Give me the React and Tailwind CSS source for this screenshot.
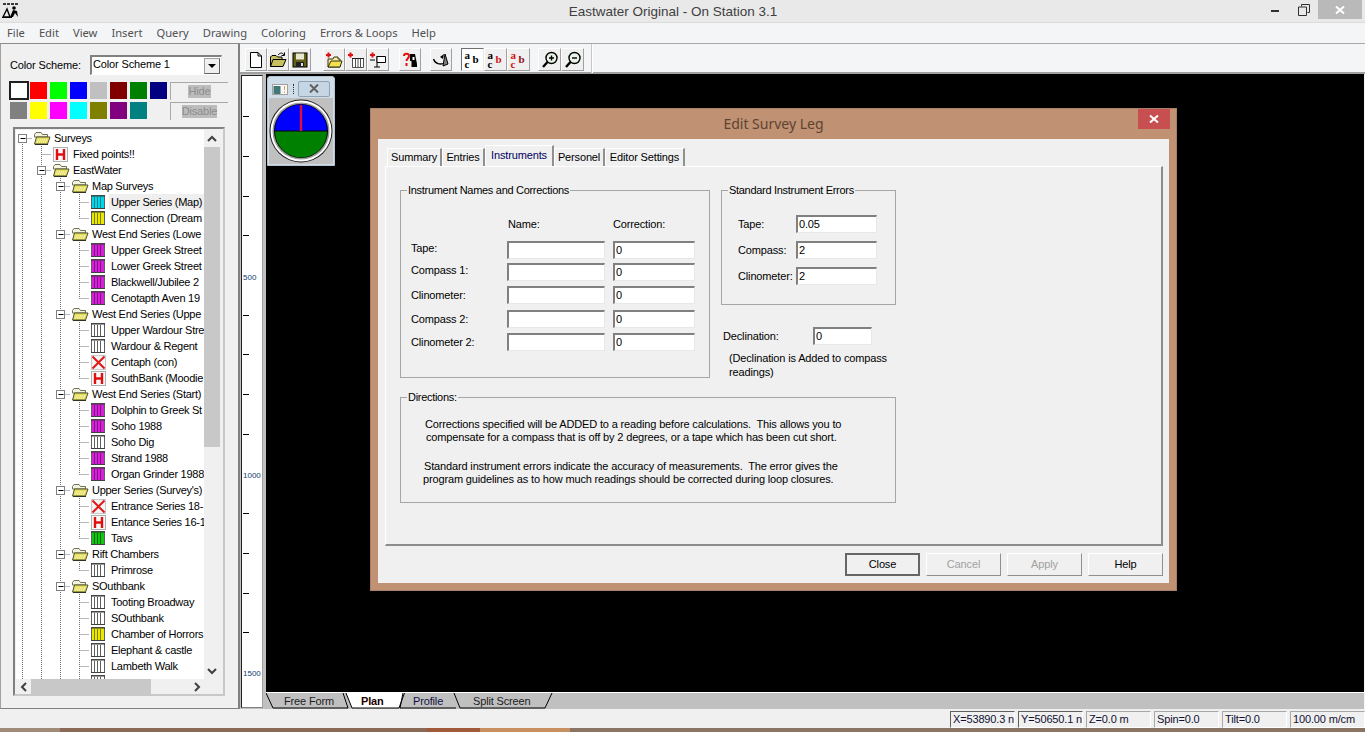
import React from "react";

const MENU = ["File", "Edit", "View", "Insert", "Query", "Drawing", "Coloring", "Errors & Loops", "Help"];

const TREE = [
  [0, "f", "Surveys"],
  [1, "H", "Fixed points!!"],
  [1, "f", "EastWater"],
  [2, "f", "Map Surveys"],
  [3, "c", "Upper Series (Map)", "sel"],
  [3, "y", "Connection (Dream", "last"],
  [2, "f", "West End Series (Lowe"],
  [3, "m", "Upper Greek Street"],
  [3, "m", "Lower Greek Street"],
  [3, "m", "Blackwell/Jubilee 2"],
  [3, "m", "Cenotapth Aven 19", "last"],
  [2, "f", "West End Series (Uppe"],
  [3, "w", "Upper Wardour Stre"],
  [3, "w", "Wardour & Regent"],
  [3, "X", "Centaph (con)"],
  [3, "H", "SouthBank (Moodie", "last"],
  [2, "f", "West End Series (Start)"],
  [3, "m", "Dolphin to Greek St"],
  [3, "m", "Soho 1988"],
  [3, "w", "Soho Dig"],
  [3, "m", "Strand 1988"],
  [3, "m", "Organ Grinder 1988", "last"],
  [2, "f", "Upper Series (Survey's)"],
  [3, "X", "Entrance Series 18-"],
  [3, "H", "Entance Series 16-1"],
  [3, "g", "Tavs", "last"],
  [2, "f", "Rift Chambers"],
  [3, "w", "Primrose", "last"],
  [2, "f", "SOuthbank"],
  [3, "w", "Tooting Broadway"],
  [3, "w", "SOuthbank"],
  [3, "y", "Chamber of Horrors"],
  [3, "w", "Elephant & castle"],
  [3, "w", "Lambeth Walk"],
  [3, "w", ""],
];

const FILL = { c: "#00d8e8", y: "#e8e800", m: "#d820d8", w: "#ffffff", g: "#10c810" };
const BARS = { c: "#108090", y: "#808000", m: "#801088", w: "#606060", g: "#086808" };

function Folder() {
  return (
    <svg width="18" height="14" viewBox="0 0 18 14" className="block">
      <path d="M1.5 3.5 L3 1.5 H8 L9.5 3.5 H14.5 V6 H1.5 Z" fill="#f4f4e0" stroke="#707050" />
      <path d="M1.5 13 L3.5 6 H17 L14.5 13 Z" fill="#e6e060" stroke="#505030" />
      <path d="M4 11 H14 M5 9 H15" stroke="#fffff0" strokeDasharray="1 1" />
      <path d="M2 13.5 H15" stroke="#303020" />
    </svg>
  );
}

function LeafIcon({ t }) {
  if (t === "X") {
    return (
      <svg width="15" height="15" viewBox="0 0 15 15" className="block">
        <rect x="0.5" y="0.5" width="14" height="14" fill="#f4f4f4" stroke="#c8c8c8" />
        <path d="M1.5 1.5 L13.5 13.5 M13.5 1.5 L1.5 13.5" stroke="#e01818" strokeWidth="2" />
      </svg>
    );
  }
  if (t === "H") {
    return (
      <svg width="15" height="15" viewBox="0 0 15 15" className="block">
        <rect x="0.5" y="0.5" width="14" height="14" fill="#f8f8f8" stroke="#b0b0b0" />
        <path d="M4 2 V13 M11 2 V13 M4 7.5 H11" stroke="#e01010" strokeWidth="2.4" />
      </svg>
    );
  }
  return (
    <svg width="14" height="14" viewBox="0 0 14 14" className="block">
      <rect x="0.5" y="0.5" width="13" height="13" fill={FILL[t]} stroke="#606060" />
      <path d="M0 1 H14" stroke="#303030" />
      <path d="M3.5 2 V13 M6.5 2 V13 M9.5 2 V13" stroke={BARS[t]} />
      <path d="M0 13.5 H14" stroke="#404040" />
    </svg>
  );
}

function Prefix({ d, folder, last }) {
  const w = 19 * (d + 1);
  const vx = (i) => 9.5 + 19 * i;
  const top = d === 0;
  const dash = { stroke: "#707070", strokeDasharray: "1 1" };
  return (
    <svg width={w} height="16" viewBox={`0 0 ${w} 16`} className="block shrink-0">
      {Array.from({ length: d }).map((_, i) => (
        <path key={i} d={`M${vx(i)} 0 V16`} {...dash} />
      ))}
      <path d={top ? `M${vx(d)} 8 V16` : `M${vx(d)} 0 V${last ? 8.5 : 16}`} {...dash} />
      <path d={`M${vx(d)} 8.5 H${vx(d) + 11}`} {...dash} />
      {folder && (
        <g>
          <rect x={vx(d) - 4} y="4.5" width="8" height="8" fill="#fff" stroke="#808080" />
          <path d={`M${vx(d) - 2} 8.5 H${vx(d) + 3}`} stroke="#000" />
        </g>
      )}
    </svg>
  );
}

function TreeRow({ row }) {
  const [d, t, label, flag] = row;
  const folder = t === "f";
  return (
    <div className="flex h-4 items-center -ml-[3px] whitespace-nowrap tracking-[-0.27px]">
      <Prefix d={d} folder={folder} last={flag === "last"} />
      <div className={folder ? "ml-[1px] w-[21px] shrink-0" : "ml-[2px] w-[20px] shrink-0"}>
        {folder ? <Folder /> : <LeafIcon t={t} />}
      </div>
      <span className={flag === "sel" ? "-ml-[2px] pl-[2px] pr-[4px] bg-[#efefef] leading-4" : "leading-4"}>{label}</span>
    </div>
  );
}

function Chevron({ dir }) {
  const p = {
    up: "M1 7 L5 3 L9 7",
    down: "M1 3 L5 7 L9 3",
    left: "M7 1 L3 5 L7 9",
    right: "M3 1 L7 5 L3 9",
  }[dir];
  return (
    <svg width="10" height="10" viewBox="0 0 10 10" className="block">
      <path d={p} fill="none" stroke="#404040" strokeWidth="2" />
    </svg>
  );
}

function Swatch({ c, sel }) {
  if (sel) {
    return <div className="w-[20px] h-[19px] -ml-[1px] -mt-[1px] bg-white border-2 border-[#202020]" />;
  }
  return <div className="w-[17px] h-[17px]" style={{ background: c }} />;
}

function DisabledBtn({ children }) {
  return (
    <div className="w-[58px] h-[18px] flex items-center justify-center border-l border-t border-[#a8a8a8] border-r-white border-b-white bg-[#f0f0f0]">
      <span className="bg-[#bcbcbc] text-[#8c8c8c] leading-[13px]">{children}</span>
    </div>
  );
}

function LeftPanel() {
  const r1 = ["#fff", "#ff0000", "#00ff00", "#0000ff", "#c0c0c0", "#800000", "#008000", "#000080"];
  const r2 = ["#808080", "#ffff00", "#ff00ff", "#00ffff", "#808000", "#800080", "#008080"];
  return (
    <div className="w-[240px] h-[666px] shrink-0 bg-[#f0f0f0] border-t border-t-[#8c8c8c] border-r-2 border-r-[#808080] border-b border-b-[#808080] border-l border-l-[#a0a0a0] flex flex-col">
      <div className="flex items-center h-[20px] mt-[11px] pl-[9px]">
        <span className="w-[80px]">Color Scheme:</span>
        <div className="w-[132px] h-[20px] bg-white border-t-2 border-l-2 border-[#808080] border-r border-r-[#e8e8e8] border-b border-b-white flex items-center pl-[1px] justify-between">
          <span className="leading-[15px] mb-[2px]">Color Scheme 1</span>
          <div className="w-[16px] h-[16px] mr-[1px] bg-[#f0f0f0] border border-[#a0a0a0] border-b-[#606060] border-r-[#606060] flex items-center justify-center">
            <svg width="8" height="4" viewBox="0 0 8 4" className="block"><path d="M0 0 H8 L4 4 Z" fill="#000" /></svg>
          </div>
        </div>
      </div>
      <div className="flex mt-[7px] pl-[9px] h-[18px]">
        <div className="flex w-[160px]">
          {r1.map((c, i) => (
            <div key={i} className="w-[20px]"><Swatch c={c} sel={i === 0} /></div>
          ))}
        </div>
        <DisabledBtn>Hide</DisabledBtn>
      </div>
      <div className="flex mt-[2px] pl-[9px] h-[18px]">
        <div className="flex w-[160px]">
          {r2.map((c, i) => (
            <div key={i} className="w-[20px]"><Swatch c={c} /></div>
          ))}
        </div>
        <DisabledBtn>Disable</DisabledBtn>
      </div>
      <div className="ml-[12px] mt-[7px] w-[212px] h-[569px] border-2 border-[#808080] border-r-[#c8c8c8] border-b-[#c8c8c8] bg-[#f0f0f0] p-[1px] pl-0 flex flex-col">
        <div className="flex h-[549px] ml-[1px]">
          <div className="w-[188px] bg-white overflow-hidden h-full">
            {TREE.map((r, i) => <TreeRow key={i} row={r} />)}
          </div>
          <div className="w-[16px] flex flex-col bg-[#f0f0f0]">
            <div className="h-[17px] flex items-center justify-center"><Chevron dir="up" /></div>
            <div className="h-[300px] bg-[#c8c8c8]" />
            <div className="flex-1" />
            <div className="h-[17px] flex items-center justify-center"><Chevron dir="down" /></div>
          </div>
        </div>
        <div className="flex h-[15px] items-center ml-[1px]">
          <div className="w-[15px] flex justify-center"><Chevron dir="left" /></div>
          <div className="w-[120px] h-[15px] bg-[#c8c8c8]" />
          <div className="w-[38px]" />
          <div className="w-[15px] flex justify-center"><Chevron dir="right" /></div>
        </div>
      </div>
    </div>
  );
}

function TB({ children, pressed, mr, wide }) {
  return (
    <div className={
      (wide ? "w-[23px] " : "w-[22px] ") +
      "h-[23px] flex items-center justify-center border " +
      (pressed
        ? "bg-white border-t-[#707070] border-l-[#707070] border-r-[#e8e8e8] border-b-[#e8e8e8] "
        : "bg-[#f0f0f0] border-t-white border-l-white border-r-[#a0a0a0] border-b-[#a0a0a0] ") +
      (mr || "")
    }>
      {children}
    </div>
  );
}

const Ico = ({ children }) => (
  <svg width="18" height="18" viewBox="0 0 18 18" className="block">{children}</svg>
);

const Plus = () => <path d="M1 4 H6 M3.5 1.5 V6.5" stroke="#e01010" strokeWidth="2" />;

function AbcIcon({ a, c, b }) {
  return (
    <div className="w-[16px] h-[18px] flex font-['Liberation_Serif',serif] font-bold text-[11px] tracking-normal leading-[9px]">
      <div className="flex flex-col w-[8px]">
        <span style={{ color: a }}>a</span>
        <span style={{ color: c }}>c</span>
      </div>
      <span className="mt-[4px]" style={{ color: b }}>b</span>
    </div>
  );
}

function Toolbar() {
  return (
    <div className="h-[31px] shrink-0 bg-[#f4f5f7] border-t border-t-[#a8a8a8] border-b-2 border-b-[#a0a0a0] flex items-start pl-[5px] pt-[4px]">
      <TB><Ico><path d="M3.5 1.5 H11 L14.5 5 V16.5 H3.5 Z M11 1.5 V5 H14.5" fill="#fff" stroke="#000" /></Ico></TB>
      <TB><Ico><path d="M1.5 15.5 V6 L3 4.5 H7 L8.5 6 H13 V8 M1.5 15.5 L4 8.5 H17 L14 15.5 Z" fill="#c8c060" stroke="#000" /><path d="M9 4 C11 1.5 14 1.5 15 4 M15.5 1.5 V4.5 H12.5" fill="none" stroke="#000" /></Ico></TB>
      <TB mr="mr-[12px]"><Ico><rect x="2" y="2" width="14" height="14" fill="#606018" stroke="#000" /><rect x="5" y="2.5" width="8" height="6" fill="#e8e8d0" /><rect x="5" y="11" width="8" height="5" fill="#202020" /><rect x="10" y="12" width="2" height="3" fill="#e0e0e0" /></Ico></TB>
      <TB><Ico><Plus /><path d="M3 16 V8 H8 L9 6 H13 V8 H15 V16 Z" fill="#f8f0a0" stroke="#303010" /><path d="M3 16 L6 10 H17 L15 16 Z" fill="#f4e050" stroke="#303010" /></Ico></TB>
      <TB><Ico><Plus /><path d="M5.5 7.5 H16.5 V16.5 H5.5 Z M8.5 8 V16 M11 8 V16 M13.5 8 V16" fill="#fff" stroke="#505050" /><path d="M5 7.5 H17" stroke="#202020" /></Ico></TB>
      <TB mr="mr-[10px]"><Ico><Plus /><path d="M8 5 V16 M5 16 H11" stroke="#000" /><path d="M8 5.5 H16.5 V11.5 H8 Z" fill="#fff" stroke="#000" /><path d="M1 9 H6" stroke="#000" /></Ico></TB>
      <TB mr="mr-[9px]"><Ico><path d="M9 3 H14 L16 13 V16 H10.5 V10 H9 Z" fill="#000" /><path d="M11.5 6 H13.5 V9 H11.5 Z" fill="#fff" /><path d="M3 5 C3 2 8 2 8 5 C8 7.5 5.5 7.5 5.5 10 M5.5 12 V15" fill="none" stroke="#e01010" strokeWidth="2" /></Ico></TB>
      <TB mr="mr-[9px]"><Ico><path d="M1.5 8 C3 13 8 14 13 12" fill="none" stroke="#000" strokeWidth="1.3" /><path d="M11 15 L13 3 L16 13 Z" fill="#808080" stroke="#000" /><path d="M8 6 L12 3 L11 8 Z" fill="#000" /></Ico></TB>
      <TB pressed wide><AbcIcon a="#000" c="#000" b="#000" /></TB>
      <TB wide><AbcIcon a="#000" c="#000" b="#d01010" /></TB>
      <TB wide mr="mr-[8px]"><AbcIcon a="#d01010" c="#d01010" b="#901010" /></TB>
      <TB wide><Ico><circle cx="10.5" cy="7" r="5.5" fill="#e8f4e8" stroke="#000" strokeWidth="1.4" /><path d="M8 7 H13 M10.5 4.5 V9.5" stroke="#000" strokeWidth="1.4" /><path d="M6.5 11 L2 16" stroke="#000" strokeWidth="2.4" /></Ico></TB>
      <TB wide><Ico><circle cx="10.5" cy="7" r="5.5" fill="#e8f4e8" stroke="#000" strokeWidth="1.4" /><path d="M8 7 H13" stroke="#000" strokeWidth="1.4" /><path d="M6.5 11 L2 16" stroke="#000" strokeWidth="2.4" /></Ico></TB>
      <div className="ml-[7px] -mt-[4px] w-[2px] h-[29px] bg-[#c8c8c8] border-r border-r-white" />
    </div>
  );
}

function Ruler() {
  const marks = [
    { label: false }, { label: false }, { label: false }, { label: false }, { label: "500" },
    { label: false }, { label: false }, { label: false }, { label: false }, { label: "1000" },
    { label: false }, { label: false }, { label: false }, { label: false }, { label: "1500" },
  ];
  return (
    <div className="w-[26px] shrink-0 flex flex-col bg-[#c0c0c0] pl-[1px] pr-[3px] pt-[1px] pb-[1px]">
      <div className="flex-1 bg-white border-t border-l border-[#202020] border-b border-b-[#808080] border-r border-r-[#a0a0a0] pt-[21px]">
        {marks.map((m, i) => (
          <div key={i} className="h-[39.7px] flex items-center">
            {m.label ? (
              <span className="text-[8px] leading-none tracking-normal text-[#104070] ml-[1px] pt-[4px]">{m.label}</span>
            ) : (
              <div className="w-[6px] h-[1px] bg-black ml-[1px]" />
            )}
          </div>
        ))}
      </div>
    </div>
  );
}

function Compass() {
  return (
    <div className="absolute left-[1px] top-[2px] w-[68px] h-[90px] bg-[#cfdde9] rounded-t-[3px] border border-[#b4c4d2] flex flex-col">
      <div className="h-[21px] flex items-center pl-[4px] relative">
        <svg width="16" height="11" viewBox="0 0 16 11" className="block mt-[3px]">
          <rect x="0.5" y="0.5" width="15" height="10" fill="#f8f8f8" stroke="#a0a0a0" />
          <rect x="1.5" y="2" width="7" height="8" fill="#407878" />
          <path d="M12.5 2 V6 M12.5 7.5 V9" stroke="#e0a040" />
        </svg>
        <div className="ml-[5px] mr-[3px] w-[2px] h-[10px] mt-[3px] border-l border-dotted border-[#303030]" />
        <div className="w-[32px] h-[16px] mt-[2px] border border-[#8fa2b4] rounded-[2px] bg-[#c6d6e4] flex items-center justify-center">
          <svg width="10" height="9" viewBox="0 0 10 9" className="block"><path d="M1 0.5 L9 8.5 M9 0.5 L1 8.5" stroke="#606060" strokeWidth="2" /></svg>
        </div>
      </div>
      <div className="flex-1 mx-[1px] mb-[1px] bg-[#c0c0c0] flex items-center justify-center">
        <svg width="64" height="64" viewBox="0 0 64 64" className="block">
          <circle cx="32" cy="32" r="31.5" fill="#202020" />
          <circle cx="32" cy="32" r="30.5" fill="#ffffff" />
          <circle cx="32" cy="32" r="28.5" fill="#9a9a9a" />
          <circle cx="32" cy="32" r="27" fill="#000" />
          <path d="M6 31.5 A26 26 0 0 1 58 31.5 Z" fill="#0000ff" />
          <path d="M6 32.5 A26 26 0 0 0 58 32.5 Z" fill="#008000" />
          <path d="M32 6 V32" stroke="#e01030" strokeWidth="2.4" />
        </svg>
      </div>
    </div>
  );
}

function Input({ v, w }) {
  return (
    <div className={"h-[18px] bg-white border-t-2 border-l-2 border-[#808080] border-r border-b border-r-[#e8e8e8] border-b-[#e8e8e8] pl-[1px] leading-[15px] " + w}>
      {v}
    </div>
  );
}

function Group({ title, className, children }) {
  return (
    <fieldset className={"border border-[#a6a6a6] " + className}>
      <legend className="ml-[6px] px-[1px] leading-[14px] tracking-[-0.3px]">{title}</legend>
      {children}
    </fieldset>
  );
}

function DlgBtn({ children, kind }) {
  const cls =
    kind === "def"
      ? "border-2 border-[#666666] text-black"
      : kind === "dis"
      ? "border border-white border-r-[#909090] border-b-[#909090] text-[#a0a0a0]"
      : "border border-white border-r-[#909090] border-b-[#909090] text-black";
  return (
    <div className={"w-[75px] h-[23px] flex items-center justify-center bg-[#f0f0f0] " + cls}>{children}</div>
  );
}

function Tab({ children, active, w }) {
  return (
    <div className={
      "flex items-center justify-center border-r-2 border-r-[#909090] " + w + " " +
      (active
        ? "h-[21px] bg-[#f0f0f0] border-t border-l border-white text-[#000060] pb-[2px]"
        : "h-[18px] mt-[3px] bg-[#f0f0f0] border-t border-l border-white")
    }>
      {children}
    </div>
  );
}

function Dialog() {
  const rows = [
    ["Tape:", "mb-[4px]", "self-start"],
    ["Compass 1:", "mb-[5px]", "self-start"],
    ["Clinometer:", "mb-[6px]", "self-center"],
    ["Compass 2:", "mb-[5px]", "self-center"],
    ["Clinometer 2:", "", "self-center"],
  ];
  return (
    <div className="absolute left-[104px] top-[34px] w-[807px] h-[483px] bg-[#c09172] border border-[#a88068] flex flex-col">
      <div className="h-[30px] shrink-0 flex justify-center relative">
        <span className="text-[#5c4434] text-[14px] tracking-normal font-['Noto_Sans',sans-serif] leading-[29px]">Edit Survey Leg</span>
        <div className="absolute right-[6px] top-0 w-[32px] h-[20px] bg-[#c84f4f] flex items-center justify-center">
          <svg width="10" height="10" viewBox="0 0 10 10" className="block"><path d="M1 1.5 L9 8.5 M9 1.5 L1 8.5" stroke="#fff" strokeWidth="2" /></svg>
        </div>
      </div>
      <div className="mx-[7px] w-[791px] h-[444px] bg-[#f0f0f0] pt-[7px] px-[7px]">
        <div className="flex h-[20px] pl-[2px] items-end">
          <Tab w="w-[55px]">Summary</Tab>
          <Tab w="w-[43px]">Entries</Tab>
          <Tab w="w-[69px]" active>Instruments</Tab>
          <Tab w="w-[51px]">Personel</Tab>
          <Tab w="w-[80px]">Editor Settings</Tab>
        </div>
        <div className="h-[380px] w-[778px] border-t border-t-white border-l border-l-white border-r-2 border-r-[#8c8c8c] border-b-2 border-b-[#8c8c8c] pl-[14px] pt-[16px]">
          <div className="flex">
            <Group title="Instrument Names and Corrections" className="w-[310px] h-[195px] shrink-0">
              <div className="pl-[10px]">
                <div className="flex pl-[96px] mt-[20px] mb-[10px] leading-[14px]">
                  <span className="w-[106px] pl-[1px]">Name:</span>
                  <span>Correction:</span>
                </div>
                {rows.map(([label, mb, self]) => (
                  <div key={label} className={"flex h-[18px] " + mb}>
                    <span className={"w-[96px] leading-[14px] " + self}>{label}</span>
                    <Input v="" w="w-[98px] mr-[8px]" />
                    <Input v="0" w="w-[82px]" />
                  </div>
                ))}
              </div>
            </Group>
            <div className="ml-[11px] w-[176px]">
              <Group title="Standard Instrument Errors" className="w-[175px] h-[122px]">
                <div className="flex flex-col gap-[8px] mt-[18px] pl-[16px]">
                  {[["Tape:", "0.05"], ["Compass:", "2"], ["Clinometer:", "2"]].map(([l, v]) => (
                    <div key={l} className="flex items-center h-[18px]">
                      <span className="w-[58px] whitespace-nowrap">{l}</span>
                      <Input v={v} w="w-[81px]" />
                    </div>
                  ))}
                </div>
              </Group>
              <div className="flex items-center h-[18px] mt-[22px] ml-[2px]">
                <span className="w-[90px]">Declination:</span>
                <Input v="0" w="w-[59px]" />
              </div>
              <div className="mt-[6px] ml-[8px] w-[170px] leading-[14px]">(Declination is Added to compass readings)</div>
            </div>
          </div>
          <Group title="Directions:" className="w-[496px] h-[113px] mt-[11px] whitespace-pre leading-[13px]">
            <div className="pl-[24px] mt-[14px]">{"Corrections specified will be ADDED to a reading before calculations.  This allows you to"}</div>
            <div className="pl-[25px]">compensate for a compass that is off by 2 degrees, or a tape which has been cut short.</div>
            <div className="pl-[23px] mt-[16px]">{"Standard instrument errors indicate the accuracy of measurements.  The error gives the"}</div>
            <div className="pl-[22px]">program guidelines as to how much readings should be corrected during loop closures.</div>
          </Group>
        </div>
        <div className="flex justify-end gap-[6px] w-[778px] mt-[7px]">
          <DlgBtn kind="def">Close</DlgBtn>
          <DlgBtn kind="dis">Cancel</DlgBtn>
          <DlgBtn kind="dis">Apply</DlgBtn>
          <DlgBtn>Help</DlgBtn>
        </div>
      </div>
    </div>
  );
}

function SheetTabs() {
  return (
    <div className="h-[16px] bg-[#c0c0c0] relative shrink-0 flex items-center">
      <svg width="300" height="16" viewBox="0 0 300 16" className="absolute left-0 top-0 block">
        <path d="M136 0 L80 0 L86 15 L133 15 L138.5 0 Z" fill="#ffffff" stroke="none" />
        <path d="M0 0 L7 15 H82 L77 0 M80 0 L86 15 H133 L138.5 0 M137 0 L134 15 H190 M188 0 L194 15 H279 L286 0" fill="none" stroke="#000" />
      </svg>
      <span className="relative ml-[18px] w-[77px] text-[#202020]">Free Form</span>
      <span className="relative w-[52px] font-bold text-[#200000]">Plan</span>
      <span className="relative w-[60px] text-[#101040]">Profile</span>
      <span className="relative text-[#202020]">Split Screen</span>
    </div>
  );
}

function StatusCell({ children, dark, w }) {
  return (
    <div className={
      (w || "w-[65px]") +
      " h-[17px] flex items-center pl-[2px] whitespace-nowrap overflow-hidden border border-r-white border-b-white " +
      (dark ? "border-t-[#606060] border-l-[#606060]" : "border-t-[#a8a8a8] border-l-[#a8a8a8]")
    }>
      {children}
    </div>
  );
}

export default function App() {
  return (
    <div className="w-[1365px] h-[732px] flex flex-col overflow-hidden bg-[#f0f0f0] text-black text-[11px] tracking-[-0.15px] font-['Liberation_Sans',Arial,sans-serif]">
      <div className="h-[22px] shrink-0 bg-[#e9e9e9] flex relative">
        <svg width="20" height="16" viewBox="0 0 20 16" className="ml-[1px] mt-[2px] block">
          <path d="M2 2 H17" stroke="#000" strokeDasharray="3 1" strokeWidth="1.4" />
          <path d="M2 15 L6 7 L9 15 Z" fill="none" stroke="#000" strokeWidth="1.4" />
          <path d="M1 15.5 H11" stroke="#000" />
          <circle cx="13" cy="6" r="1.8" fill="#000" />
          <path d="M12 8 L9 15 H12 L14 11 L17 15 L16 9 Z" fill="#000" />
        </svg>
        <div className="flex-1 text-center text-[13.5px] tracking-normal text-[#404040] leading-[24px] pl-[56px]">Eastwater Original - On Station 3.1</div>
        <div className="flex items-start">
          <svg width="12" height="4" viewBox="0 0 12 4" className="block mt-[10px] mr-[17px]"><rect width="8" height="2" x="2" y="0" fill="#303030" /></svg>
          <svg width="12" height="12" viewBox="0 0 12 12" className="block mt-[4px] mr-[8px]"><path d="M3.5 2.5 V0.5 H11.5 V8.5 H9.5 M0.5 3 H8.5 V11.5 H0.5 Z" fill="none" stroke="#303030" /></svg>
          <div className="w-[44px] h-[19px] bg-[#b9b9b9] mr-[3px] flex items-center justify-center">
            <svg width="10" height="10" viewBox="0 0 10 10" className="block"><path d="M1 1.5 L9 8.5 M9 1.5 L1 8.5" stroke="#fff" strokeWidth="2" /></svg>
          </div>
        </div>
      </div>
      <div className="h-[21px] shrink-0 bg-[#f4f5f7] border-t border-t-[#dcdcdc] flex items-center pl-[7px] gap-[14px] text-[11.2px] tracking-normal text-[#505050] font-['Noto_Sans',sans-serif]">
        {MENU.map((m) => <span key={m}>{m}</span>)}
      </div>
      <div className="h-[666px] shrink-0 flex">
        <LeftPanel />
        <div className="w-[1125px] flex flex-col">
          <Toolbar />
          <div className="flex-1 flex min-h-0">
            <Ruler />
            <div className="flex-1 flex flex-col pr-[1px] bg-[#f4f5f7]">
              <div className="h-[619px] shrink-0 bg-black relative border-b border-b-white">
                <Compass />
                <Dialog />
              </div>
              <SheetTabs />
            </div>
          </div>
        </div>
      </div>
      <div className="h-[19px] shrink-0 flex justify-end items-end gap-[3px] text-[#101030]">
        <StatusCell dark>X=53890.3 n</StatusCell>
        <StatusCell dark>Y=50650.1 n</StatusCell>
        <StatusCell>Z=0.0 m</StatusCell>
        <StatusCell>Spin=0.0</StatusCell>
        <StatusCell>Tilt=0.0</StatusCell>
        <StatusCell w="w-[75px]">100.00 m/cm</StatusCell>
      </div>
      <div className="flex-1 flex">
        <div className="w-[60px] bg-[#a08a78]" />
        <div className="w-[367px] bg-[#8a6a54]" />
        <div className="w-[53px] bg-[#a05a3a]" />
        <div className="w-[90px] bg-[#c89060]" />
        <div className="flex-1 bg-[#8a7464]" />
      </div>
    </div>
  );
}
